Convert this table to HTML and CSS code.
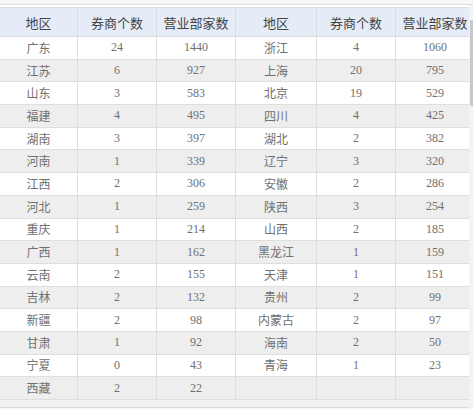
FILE: index.html
```html
<!DOCTYPE html>
<html lang="zh">
<head>
<meta charset="utf-8">
<link rel="stylesheet" href="styles.css">
</head>
<body>
<div class="frame">
  <div class="viewport">
    <table class="grid">
      <thead>
        <tr><th>地区</th><th>券商个数</th><th>营业部家数</th><th>地区</th><th>券商个数</th><th>营业部家数</th></tr>
      </thead>
      <tbody>
        <tr><td>广东</td><td>24</td><td>1440</td><td>浙江</td><td>4</td><td>1060</td></tr>
        <tr><td>江苏</td><td>6</td><td>927</td><td>上海</td><td>20</td><td>795</td></tr>
        <tr><td>山东</td><td>3</td><td>583</td><td>北京</td><td>19</td><td>529</td></tr>
        <tr><td>福建</td><td>4</td><td>495</td><td>四川</td><td>4</td><td>425</td></tr>
        <tr><td>湖南</td><td>3</td><td>397</td><td>湖北</td><td>2</td><td>382</td></tr>
        <tr><td>河南</td><td>1</td><td>339</td><td>辽宁</td><td>3</td><td>320</td></tr>
        <tr><td>江西</td><td>2</td><td>306</td><td>安徽</td><td>2</td><td>286</td></tr>
        <tr><td>河北</td><td>1</td><td>259</td><td>陕西</td><td>3</td><td>254</td></tr>
        <tr><td>重庆</td><td>1</td><td>214</td><td>山西</td><td>2</td><td>185</td></tr>
        <tr><td>广西</td><td>1</td><td>162</td><td>黑龙江</td><td>1</td><td>159</td></tr>
        <tr><td>云南</td><td>2</td><td>155</td><td>天津</td><td>1</td><td>151</td></tr>
        <tr><td>吉林</td><td>2</td><td>132</td><td>贵州</td><td>2</td><td>99</td></tr>
        <tr><td>新疆</td><td>2</td><td>98</td><td>内蒙古</td><td>2</td><td>97</td></tr>
        <tr><td>甘肃</td><td>1</td><td>92</td><td>海南</td><td>2</td><td>50</td></tr>
        <tr><td>宁夏</td><td>0</td><td>43</td><td>青海</td><td>1</td><td>23</td></tr>
        <tr><td>西藏</td><td>2</td><td>22</td><td></td><td></td><td></td></tr>
      </tbody>
    </table>
    <div class="hbar"></div>
  </div>
  <div class="vbar"><div class="thumb"></div></div>
</div>
</body>
</html>
```
FILE: styles.css
```css
html, body {
  margin: 0;
  padding: 0;
}
body {
  font-family: "Liberation Serif", "Noto Sans CJK SC", serif;
  color: #666;
  background: #f6f6f6;
  padding-top: 4px;
}
.frame {
  display: flex;
  border-top: 1px solid #dcdcdc;
  background: #fff;
  height: 403px;
}
.viewport {
  width: 469px;
  padding-top: 2px;
  display: flex;
  flex-direction: column;
}
.grid {
  border-collapse: collapse;
  table-layout: fixed;
  width: 469px;
}
.grid th, .grid td {
  border: 1px solid #dedede;
  text-align: center;
  padding: 0;
}
.grid th:nth-child(1) { width: 77px; }
.grid th:nth-child(2) { width: 78px; }
.grid th:nth-child(3) { width: 78px; }
.grid th:nth-child(4) { width: 80px; }
.grid th:nth-child(5) { width: 78px; }
.grid th:nth-child(6) { width: 78px; }
.grid th:first-child, .grid td:first-child {
  border-left: none;
}
.grid th {
  height: 28px;
  background: #e5ebf7;
  color: #444;
  font-size: 13px;
  font-weight: normal;
}
.grid td {
  height: 21.7px;
  font-size: 12px;
  color: #707070;
}
.grid tbody tr:nth-child(even) td {
  background: #eeeeee;
}
.hbar {
  height: 10px;
  background: #f2f2f2;
  border-bottom: 1px solid #dcdcdc;
}
.vbar {
  width: 4px;
  background: #f3f3f3;
}
.thumb {
  margin-top: 15px;
  margin-left: 1px;
  width: 3px;
  height: 86px;
  background: #c8c8c8;
}
```
